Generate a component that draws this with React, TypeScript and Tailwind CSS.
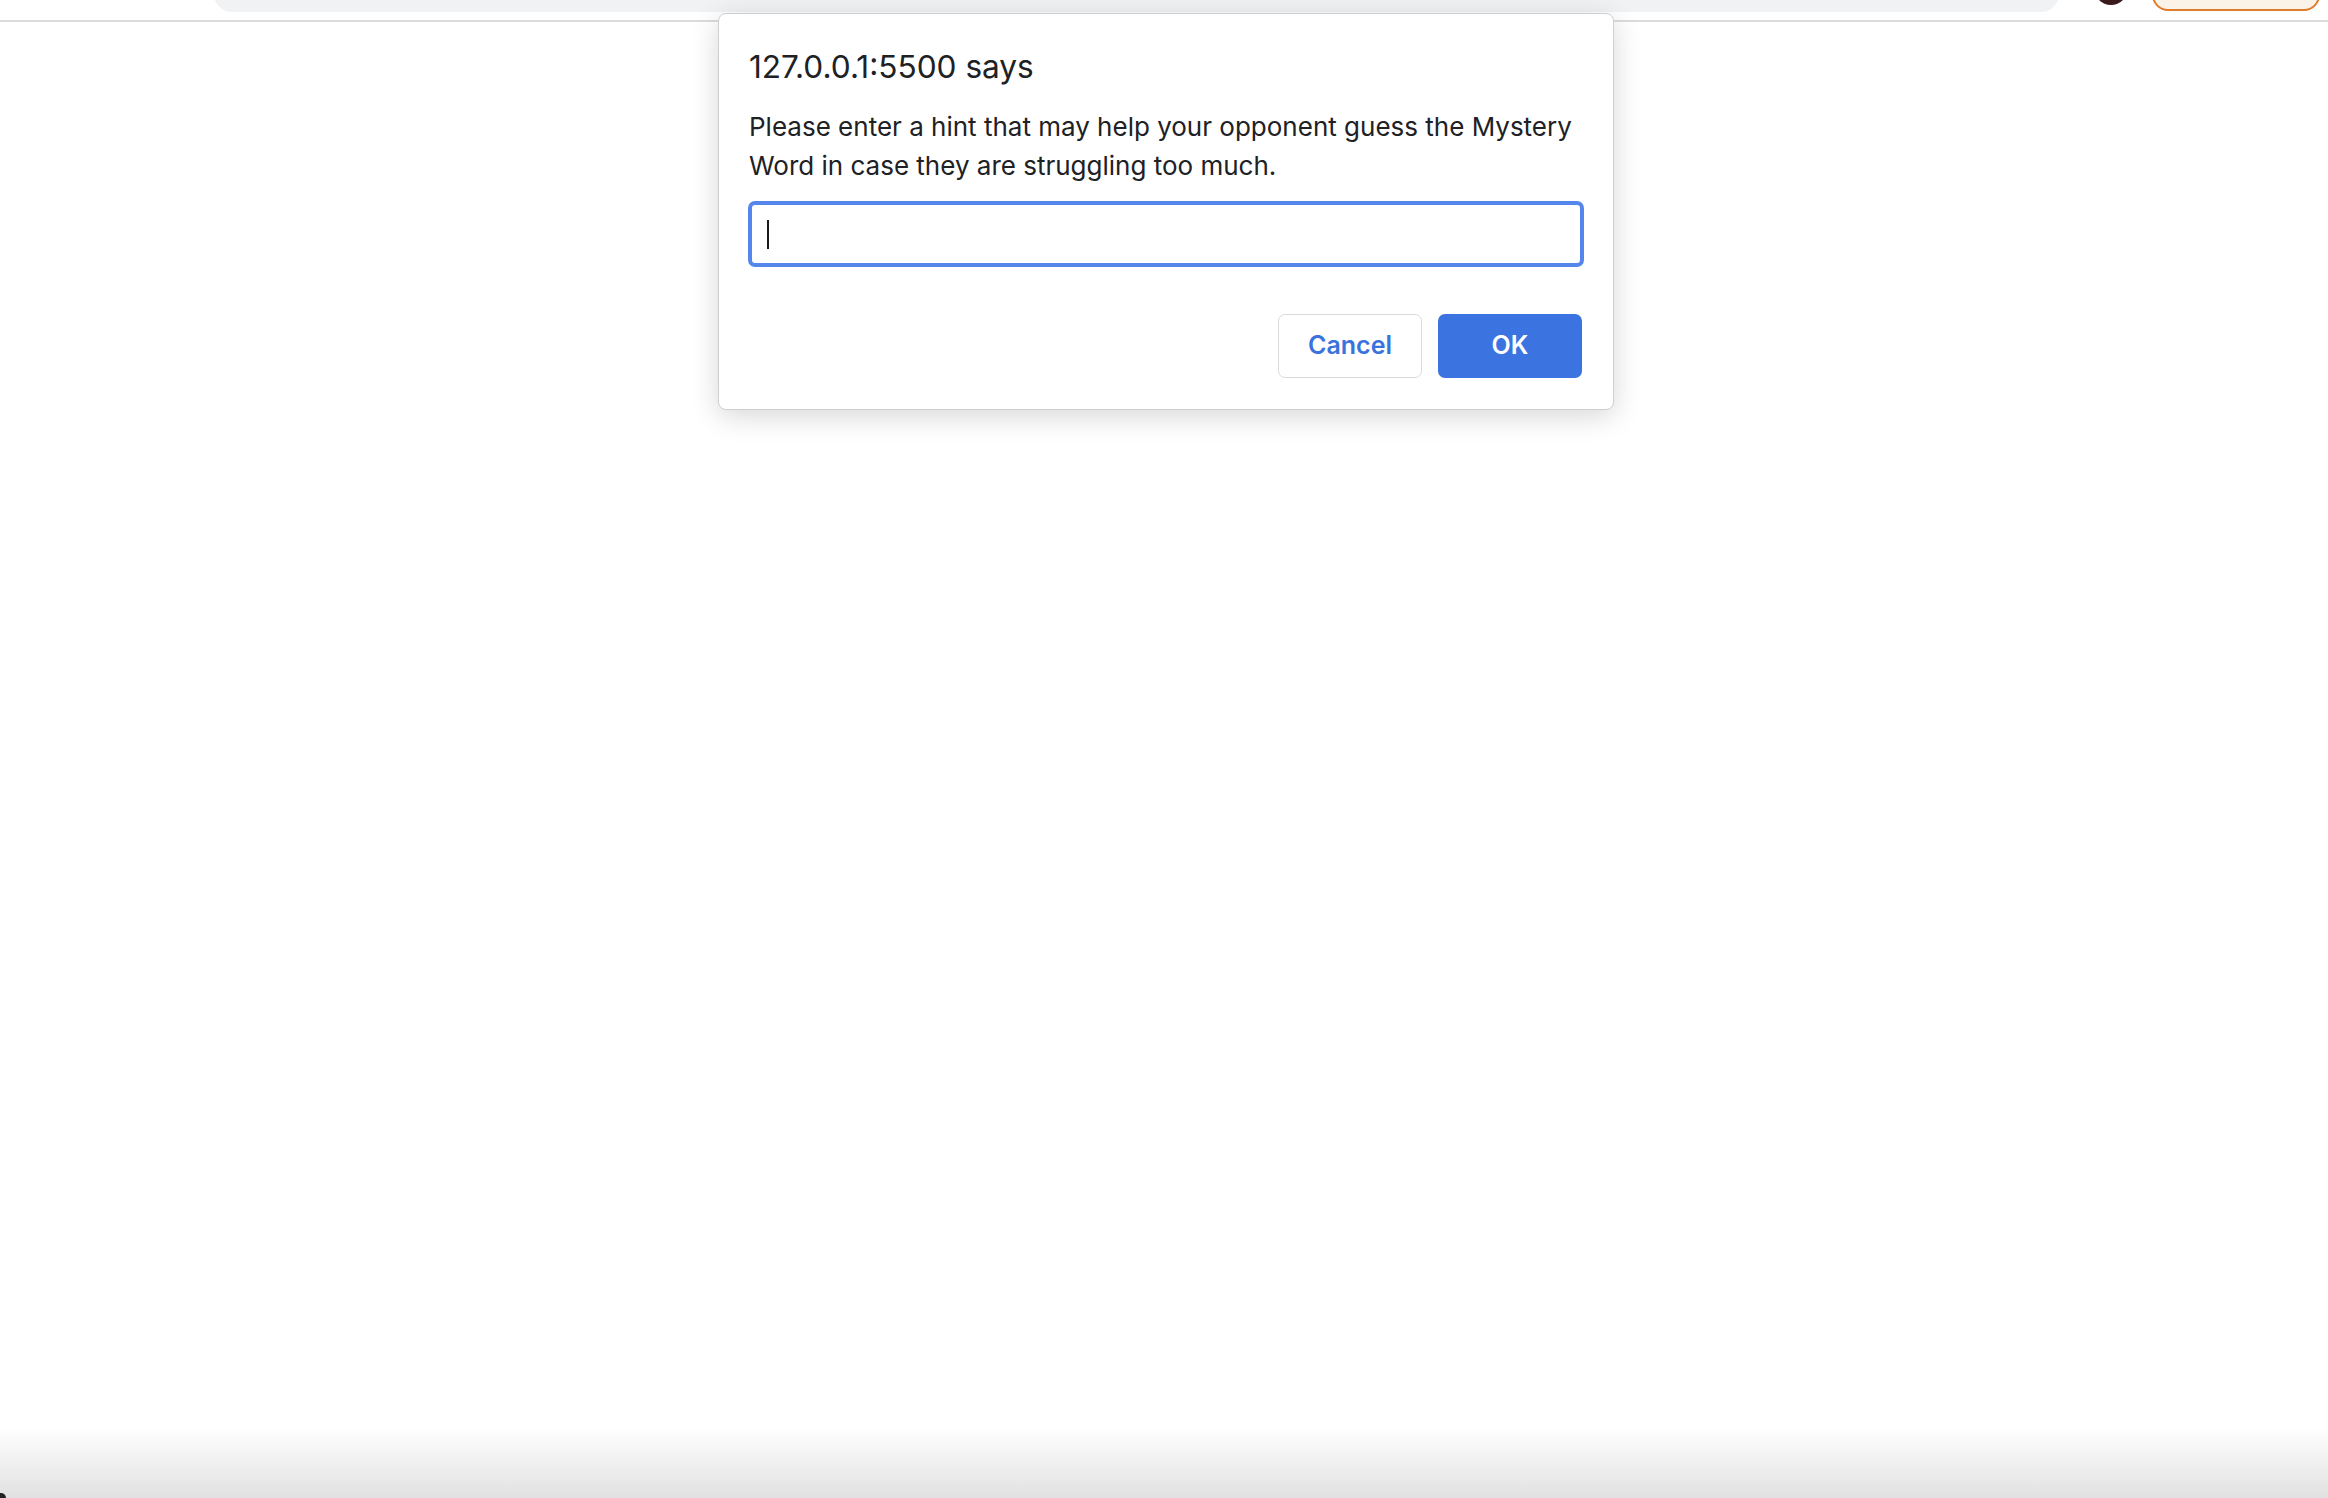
import React from "react";

export default function App() {
  return (
    <div
      className="relative w-[2328px] h-[1498px] bg-white overflow-hidden flex flex-col"
      style={{ fontFamily: "Inter, 'Noto Sans', 'Liberation Sans', sans-serif" }}
    >
      {/* browser chrome remnant */}
      <div className="flex items-start h-[22px] border-b-2 border-[#dcdcdc] shrink-0">
        <div className="w-[214px] shrink-0" />
        <div className="flex-1 h-[36px] mt-[-24px] rounded-[18px] bg-[#f1f2f3]" />
        <div className="ml-[35px] w-[34px] h-[34px] mt-[-29px] rounded-full bg-[#3a1a1c] shrink-0" />
        <div className="ml-[24px] mr-[8px] w-[168px] h-[40px] mt-[-29px] rounded-[16px] border-2 border-[#e07b2a] bg-[#fbf3e8] shrink-0" />
      </div>

      {/* page body */}
      <div className="flex-1" />

      {/* bottom fade */}
      <div className="h-[70px] shrink-0 bg-gradient-to-b from-white to-[#e1e1e1]" />
      <div className="absolute left-0 bottom-0 w-[6px] h-[5px] bg-[#222] rounded-tr-[6px]" />

      {/* prompt dialog */}
      <div className="absolute left-[718px] top-[13px] w-[896px] rounded-[8px] border border-[#cfcfcf] bg-white shadow-[0_6px_28px_rgba(0,0,0,0.16)] pl-[30px] pr-[29px] pt-[35px] pb-[31px] text-[#202124]">
        <div className="text-[31.6px] leading-[36px] whitespace-nowrap">127.0.0.1:5500 says</div>
        <div className="mt-[22px] text-[26px] leading-[39px]">
          <div className="whitespace-nowrap">Please enter a hint that may help your opponent guess the Mystery</div>
          <div className="whitespace-nowrap">Word in case they are struggling too much.</div>
        </div>
        <div className="mt-[16px] ml-[-1px] h-[66px] rounded-[7px] border-[4px] border-[#5486ec] flex items-center pl-[15px]">
          <div className="w-[2px] h-[29px] bg-[#1a1a1a]" />
        </div>
        <div className="mt-[47px] mr-[2px] flex justify-end gap-[16px]">
          <button className="w-[144px] h-[64px] rounded-[7px] border border-[#dadada] bg-white text-[25px] font-semibold text-[#3a72de]">
            Cancel
          </button>
          <button className="w-[144px] h-[64px] rounded-[7px] bg-[#3b74e0] text-[25px] font-semibold text-white">
            OK
          </button>
        </div>
      </div>
    </div>
  );
}
